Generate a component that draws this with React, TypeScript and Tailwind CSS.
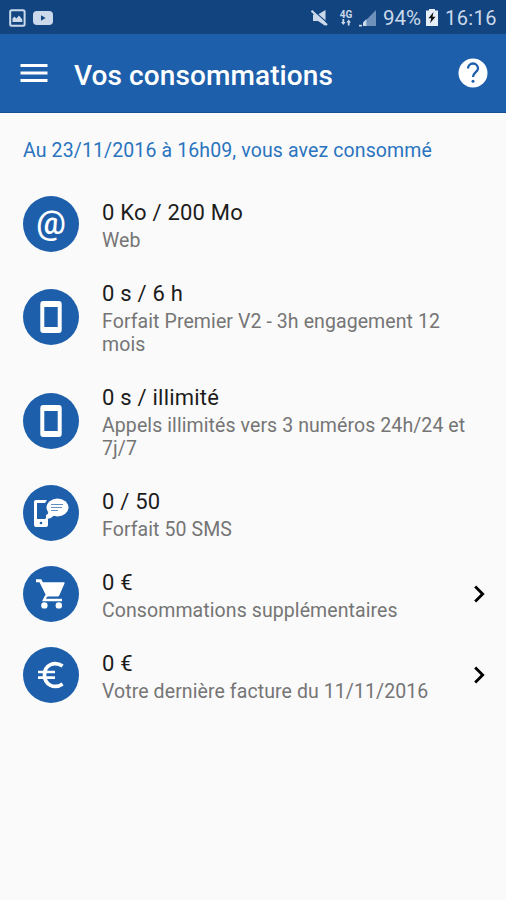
import { ReactNode } from "react";
import { MdChevronRight, MdMenu } from "react-icons/md";

interface Usage {
  id: string;
  icon: ReactNode;
  value: string;
  lines: string[];
  link?: boolean;
}

function PhoneIcon() {
  return (
    <svg width="22" height="32" viewBox="0 0 22 32">
      <path fillRule="evenodd" d="M3.3 0h15.4A3 3 0 0 1 21.7 3v26a3 3 0 0 1-3 3H3.3a3 3 0 0 1-3-3V3a3 3 0 0 1 3-3Zm1 6v20h13.4V6Z" fill="#fff" />
    </svg>
  );
}

function SmsIcon() {
  return (
    <svg width="36" height="30" viewBox="0 0 36 30" fill="none">
      <path d="M3 2h11l-2 3H4v16h9v-4l2-1v11a2 2 0 0 1-2 2H3a2 2 0 0 1-2-2V4a2 2 0 0 1 2-2Z" fill="#fff" />
      <ellipse cx="24.5" cy="9.5" rx="11" ry="9" fill="#fff" />
      <path d="M15 14c0 3-1 5-3 7 4 0 7-1 9-4Z" fill="#fff" />
      <path d="M18 6.5h12M18 9.5h11M18 12.5h7" stroke="#1d5fab" strokeWidth="1" opacity="0.7" />
      <circle cx="8" cy="25" r="1.3" fill="#1d5fab" />
    </svg>
  );
}

function CartIcon() {
  return (
    <svg width="30" height="30" viewBox="0 0 30 30" fill="none">
      <path d="M0 1.8h4.4l7.8 15.2" stroke="#fff" strokeWidth="3" />
      <path d="M4.5 3.2h23.2c.8 0 1.2.6.8 1.3l-5 11.4c-.5 1-1.3 1.5-2.3 1.5H10.5Z" fill="#fff" />
      <path d="M10.3 16.5 8 21h18" stroke="#fff" strokeWidth="2.4" />
      <circle cx="8.4" cy="26.4" r="3.2" fill="#fff" />
      <circle cx="22.8" cy="26.4" r="3.2" fill="#fff" />
    </svg>
  );
}

function EuroIcon() {
  return (
    <svg width="28" height="28" viewBox="0 0 28 28" fill="none" stroke="#fff" strokeWidth="3.7">
      <path d="M25.6 5.1C17.5-.5 7.5 4 7.5 14s10 14.5 18.1 8.9" />
      <path d="M1 11h17M1 16.7h17" strokeWidth="2.7" />
    </svg>
  );
}

function HelpIcon() {
  return (
    <svg width="30" height="30" viewBox="0 0 30 30" fill="none">
      <circle cx="15" cy="15" r="14.5" fill="#fff" />
      <path d="M10 10.5a5 5 0 0 1 10 0c0 3.4-5 4.2-5 8.5" stroke="#1d5fab" strokeWidth="2.3" />
      <circle cx="15" cy="23.2" r="1.5" fill="#1d5fab" />
    </svg>
  );
}

function StatusBar() {
  return (
    <div className="flex h-[34px] items-center bg-[#124580] pt-px pl-[9px] pr-[9px] text-[#ccd9ea]">
      <svg width="17" height="18" viewBox="0 0 17 18" fill="none">
        <rect x="1.2" y="1.2" width="14.4" height="15.6" rx="1.5" stroke="currentColor" strokeWidth="2" />
        <path d="M3.5 13V9.5l2-2 1.8 2 2.7-3 3.3 4V13Z" fill="currentColor" />
      </svg>
      <svg className="ml-[7px]" width="20" height="14" viewBox="0 0 20 14">
        <rect width="20" height="14" rx="4" fill="currentColor" />
        <path d="M8 4.2v5.6L12.6 7Z" fill="#124580" />
      </svg>
      <div className="flex-1" />
      <svg width="17" height="18" viewBox="0 0 17 18">
        <path d="M2 5.5h5L14.5 1v16L7 12H2Z" fill="currentColor" />
        <path d="M2 1.2 16.5 14" stroke="#124580" strokeWidth="1.2" />
        <path d="M.5 1.8 16 16" stroke="currentColor" strokeWidth="2.2" />
      </svg>
      <div className="ml-[11px] flex w-[14px] flex-col items-center pt-px">
        <span className="text-[10px] font-bold leading-[9px]">4G</span>
        <svg width="10" height="7" viewBox="0 0 10 7" fill="currentColor">
          <path d="M0 3h1.4V0h1.8v3h1.4L2.3 6ZM5.4 3.4h1.4v3h1.8v-3H10L7.7.4Z" />
        </svg>
      </div>
      <svg className="ml-[6px]" width="18" height="18" viewBox="0 0 18 18">
        <path d="M6 12.3 17 1v16H6Z" fill="#6f92bc" />
        <path d="M0 17.5v-1.8h3v1.8ZM4 17v-3.5l3.4-3.4V17Z" fill="currentColor" />
      </svg>
      <span className="ml-[6px] w-[41px] whitespace-nowrap pt-[2px] text-[20.5px] leading-none">94%</span>
      <svg className="ml-[2px] mr-px" width="12" height="17" viewBox="0 0 12 17">
        <path d="M3 0h6v1.5h3V17H0V1.5h3Z" fill="#e6eef7" />
        <path d="M7.5 3 2.5 9.3h2.8L4 14.3l5.5-6.6H6.5Z" fill="#111" />
      </svg>
      <span className="ml-[6px] w-[52px] whitespace-nowrap text-[20px] leading-none tracking-[0.4px]">16:16</span>
    </div>
  );
}

const usages: Usage[] = [
  {
    id: "web",
    icon: <span className="pb-[4px] text-[33px] font-medium leading-none">@</span>,
    value: "0 Ko / 200 Mo",
    lines: ["Web"],
  },
  {
    id: "forfait",
    icon: <PhoneIcon />,
    value: "0 s / 6 h",
    lines: ["Forfait Premier V2 - 3h engagement 12", "mois"],
  },
  {
    id: "appels",
    icon: <PhoneIcon />,
    value: "0 s / illimité",
    lines: ["Appels illimités vers 3 numéros 24h/24 et", "7j/7"],
  },
  {
    id: "sms",
    icon: <SmsIcon />,
    value: "0 / 50",
    lines: ["Forfait 50 SMS"],
  },
  {
    id: "supplement",
    icon: <CartIcon />,
    value: "0 €",
    lines: ["Consommations supplémentaires"],
    link: true,
  },
  {
    id: "facture",
    icon: <EuroIcon />,
    value: "0 €",
    lines: ["Votre dernière facture du 11/11/2016"],
    link: true,
  },
];

function UsageRow({ icon, value, lines, link }: Usage) {
  const tall = lines.length > 1;

  return (
    <li className={`flex items-center pl-[23px] pr-[10px] ${tall ? "h-[104px]" : "h-[81px]"}`}>
      <div className={`flex size-[56px] shrink-0 items-center justify-center rounded-full bg-[#1d5fab] text-white ${tall ? "" : "mb-px"}`}>
        {icon}
      </div>
      <div className="ml-[23px] flex-1 whitespace-nowrap">
        <p className="mb-px text-[22px] leading-[30px] tracking-[0.22px] text-[#1c1c1c]">{value}</p>
        {lines.map((line) => (
          <p key={line} className="text-[19.5px] leading-[23px] tracking-[0.09px] text-[#757575]">{line}</p>
        ))}
      </div>
      {link && <MdChevronRight size={34} className="mb-px text-black" />}
    </li>
  );
}

export default function App() {
  return (
    <div className="h-[900px] w-[506px] overflow-hidden bg-[#fafafa] font-[Roboto,sans-serif]">
      <StatusBar />
      <header className="flex h-[79px] items-center border-b border-[#174f95] bg-[#1d5fab] pl-[16px] pr-[18px] text-white">
        <MdMenu size={36} />
        <h1 className="ml-[22px] flex-1 whitespace-nowrap pt-[5px] text-[28px] font-medium leading-none tracking-[0.1px]">Vos consommations</h1>
        <HelpIcon />
      </header>
      <main>
        <p className="h-[71px] whitespace-nowrap pl-[23px] pt-[26px] text-[19.5px] leading-[24px] tracking-[0.12px] text-[#2a74bf]">
          Au 23/11/2016 à 16h09, vous avez consommé
        </p>
        <ul>
          {usages.map((usage) => (
            <UsageRow key={usage.id} {...usage} />
          ))}
        </ul>
      </main>
    </div>
  );
}
